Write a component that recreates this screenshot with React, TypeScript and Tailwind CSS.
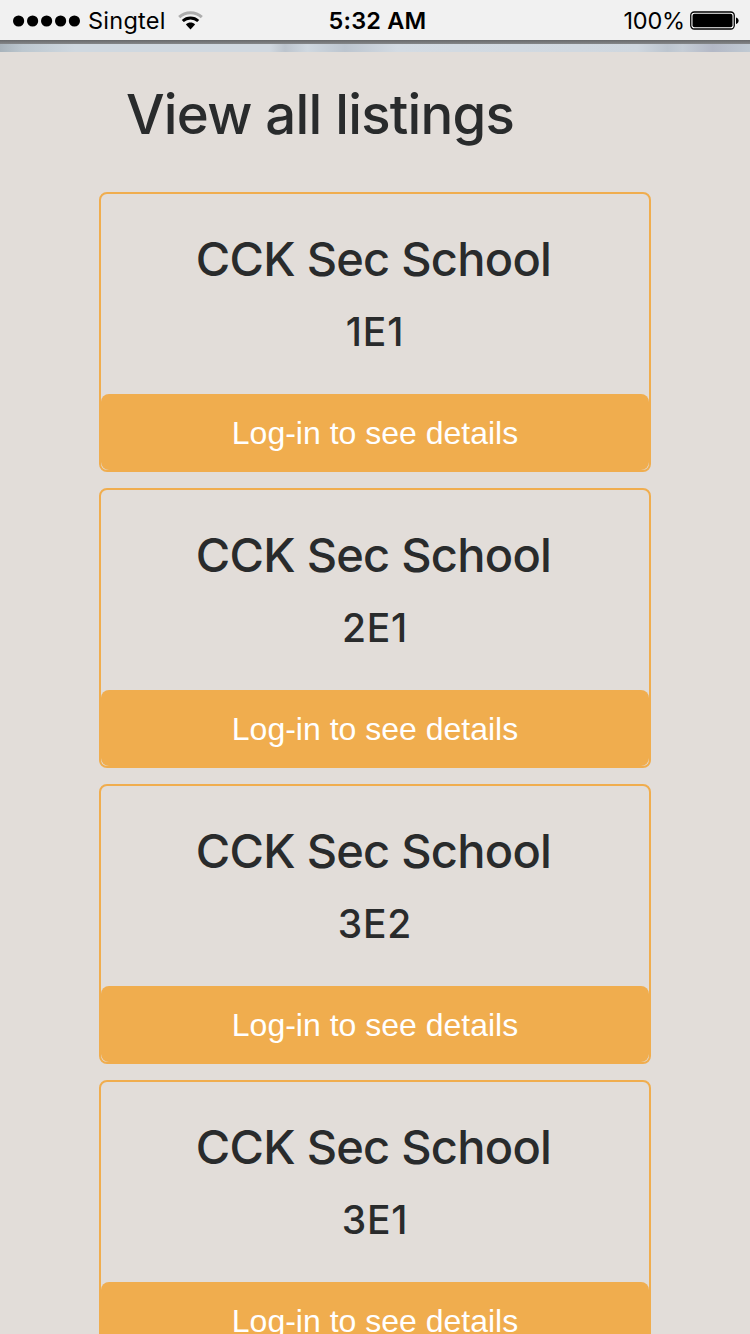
const listings = ["1E1", "2E1", "3E2", "3E1"];

function StatusBar() {
  return (
    <header className="grid h-10 shrink-0 grid-cols-3 items-center bg-[#f1f1f1] text-[23.5px] leading-[38px] text-black">
      <div className="flex h-10 items-center pl-[13px]">
        <svg width="67" height="12" viewBox="0 0 67 12" className="mt-px">
          {[5.6, 19.6, 33.6, 47.6, 61.4].map((x) => (
            <circle key={x} cx={x} cy="6" r="5.6" />
          ))}
        </svg>
        <span className="mt-0.5 ml-2 tracking-[0.25px]">Singtel</span>
        <svg width="25" height="19" viewBox="0 0 25 19" className="ml-3 fill-none stroke-black stroke-3">
          <path d="M1.2 6.2C7.5 0.3 17.5 0.3 23.8 6.2" className="stroke-[#adadad]" />
          <path d="M4.8 10C9.2 5.9 15.8 5.9 20.2 10" />
          <path d="M12.5 18.4L7.9 13.4C10.5 11 14.5 11 17.1 13.4Z" className="fill-black stroke-none" />
        </svg>
      </div>
      <div className="pt-0.5 pl-[5px] text-center font-semibold tracking-[0.2px]">5:32 AM</div>
      <div className="flex h-10 items-center justify-end pr-[11px]">
        <span className="mt-0.5 mr-[5px] tracking-[-0.2px]">100%</span>
        <svg width="49" height="19" viewBox="0 0 49 19" className="mt-px">
          <rect x="0.75" y="1" width="43.5" height="17" rx="3.5" fill="#fff" stroke="#000" strokeWidth="1.3" />
          <rect x="2.5" y="2.75" width="40" height="13.5" rx="2" />
          <path d="M46 6.5C49.5 7 49.5 12.5 46 13Z" />
        </svg>
      </div>
    </header>
  );
}

function ListingCard({ name }: { name: string }) {
  return (
    <article className="flex h-[280px] shrink-0 flex-col rounded-lg border-2 border-[#f0ad4e] text-center text-[#292b2c]">
      <h2 className="mt-[38px] pr-[3px] text-[47px] leading-[53px] font-medium tracking-[-0.75px]">CCK Sec School</h2>
      <h3 className="mt-[25px] text-[39px] leading-[44px] font-medium tracking-[0.8px]">{name}</h3>
      <button className="mt-auto h-19 w-full rounded-lg bg-[#f0ad4e] pt-0.5 font-['Liberation_Sans',Arial,sans-serif] text-[32px] leading-[74px] text-white">
        Log-in to see details
      </button>
    </article>
  );
}

export default function App() {
  return (
    <div className="flex h-[1334px] w-[750px] flex-col overflow-hidden bg-[#e2ddd9] font-['Inter',sans-serif]">
      <StatusBar />
      <div className="h-1 shrink-0 bg-linear-to-b from-[#67696b] to-[#858789]" />
      <div className="h-2 shrink-0 bg-[linear-gradient(to_right,#a8b3bb_0%,#bcc7cf_3%,#cfd8e0_10%,#d0d8e0_36%,#bcc4cd_38%,#cfd8e0_41%,#bcc5cf_46%,#d3dbe3_53%,#cfd7df_85%,#bcc5cf_89%,#c5cdd6_91%,#b3b8c6_95%,#c0cad3_100%)]" />
      <h1 className="mt-[29px] h-[66px] shrink-0 pl-[126px] text-[54.5px] leading-[66px] font-medium tracking-[-0.77px] text-[#292b2c]">
        View all listings
      </h1>
      <main className="mt-[45px] flex flex-col gap-4 px-[99px]">
        {listings.map((name) => (
          <ListingCard key={name} name={name} />
        ))}
      </main>
    </div>
  );
}
